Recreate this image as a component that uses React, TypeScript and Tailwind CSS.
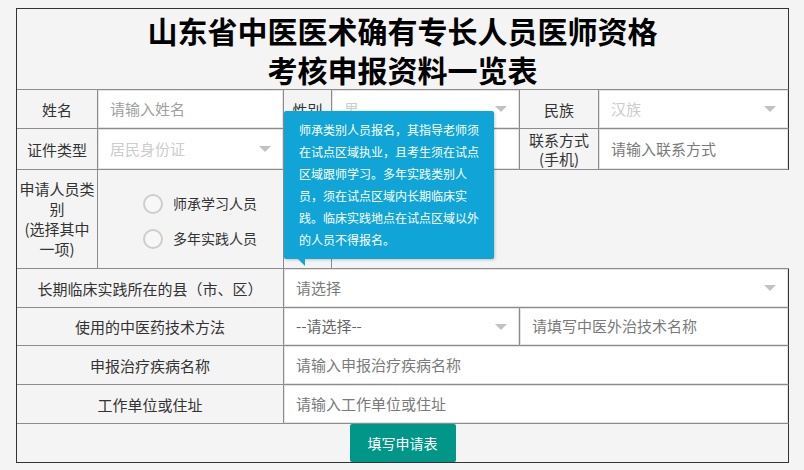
import React from "react";

const line = "border-[#8c8c8c]";

function Arrow() {
  return (
    <span className="absolute right-[11px] top-1/2 -mt-[3px] h-0 w-0 border-x-[6px] border-t-[6px] border-x-transparent border-t-[#c2c2c2]" />
  );
}

function Field({
  text,
  tone = "text-[#7a7a7a]",
  select = false,
}: {
  text?: string;
  tone?: string;
  select?: boolean;
}) {
  return (
    <div className="relative flex h-full w-full items-center border border-[#e3e3e3] bg-white pl-[11px]">
      <span className={`text-[15px] ${tone}`}>{text}</span>
      {select && <Arrow />}
    </div>
  );
}

function Label({ children, className = "" }: { children: React.ReactNode; className?: string }) {
  return (
    <div
      className={`flex items-center justify-center border-r ${line} text-center text-[15px] leading-[19px] text-[#333] ${className}`}
    >
      {children}
    </div>
  );
}

function Radio({ label }: { label: string }) {
  return (
    <label className="flex items-center gap-[10px]">
      <span className="h-[20px] w-[20px] rounded-full border-2 border-[#cdcdcd] bg-[#f7f7f7]" />
      <span className="text-[14px] text-[#333]">{label}</span>
    </label>
  );
}

export default function App() {
  return (
    <div className="min-h-[470px] bg-[#f4f4f4] pt-[8px] font-['Noto_Sans_CJK_SC',sans-serif]">
      <div className="relative ml-[16px] w-[773px] border-b border-l border-t border-[#333] bg-[#f4f4f4]">
        {/* Title */}
        <div className={`h-[81px] border-b border-r ${line} !border-r-[#333] pt-[2px] text-center text-[30px] font-bold leading-[39px] text-black`}>
          <div>山东省中医医术确有专长人员医师资格</div>
          <div>考核申报资料一览表</div>
        </div>

        {/* Row 1 */}
        <div className={`flex h-[39px] border-b border-r ${line} !border-r-[#333]`}>
          <Label className="w-[81px]">姓名</Label>
          <div className={`w-[186px] border-r ${line}`}>
            <Field text="请输入姓名" tone="text-[#a0a0a0]" />
          </div>
          <Label className="w-[48px]">性别</Label>
          <div className={`w-[188px] border-r ${line}`}>
            <Field text="男" tone="text-[#cccccc]" select />
          </div>
          <Label className="w-[79px]">民族</Label>
          <div className="flex-1">
            <Field text="汉族" tone="text-[#cccccc]" select />
          </div>
        </div>

        {/* Row 2 */}
        <div className={`flex h-[41px] border-b border-r ${line} !border-r-[#333]`}>
          <Label className="w-[81px]">证件类型</Label>
          <div className={`w-[186px] border-r ${line}`}>
            <Field text="居民身份证" tone="text-[#cccccc]" select />
          </div>
          <Label className="w-[48px]">{""}</Label>
          <div className={`w-[188px] border-r ${line}`}>
            <Field />
          </div>
          <Label className="w-[79px] leading-[18px]">
            联系方式
            <br />
            (手机)
          </Label>
          <div className="flex-1">
            <Field text="请输入联系方式" />
          </div>
        </div>

        {/* Row 3 */}
        <div className={`flex h-[99px] border-b ${line}`}>
          <Label className="w-[81px] leading-[20px]">
            <div className="max-w-[76px]">
              申请人员类别
              <br />
              (选择其中一项)
            </div>
          </Label>
          <div className={`flex w-[186px] flex-col justify-center gap-[14px] border-r ${line} pl-[45px] pt-[4px]`}>
            <Radio label="师承学习人员" />
            <Radio label="多年实践人员" />
          </div>
          <div className={`w-[48px] border-r ${line}`} />
          <div className="flex-1" />
        </div>

        {/* Row 4 */}
        <div className={`flex h-[39px] border-b border-r ${line} !border-r-[#333]`}>
          <Label className="w-[267px]">长期临床实践所在的县（市、区）</Label>
          <div className="flex-1">
            <Field text="请选择" select />
          </div>
        </div>

        {/* Row 5 */}
        <div className={`flex h-[38px] border-b border-r ${line} !border-r-[#333]`}>
          <Label className="w-[267px]">使用的中医药技术方法</Label>
          <div className={`w-[236px] border-r ${line}`}>
            <Field text="--请选择--" tone="text-[#666]" select />
          </div>
          <div className="flex-1">
            <Field text="请填写中医外治技术名称" />
          </div>
        </div>

        {/* Row 6 */}
        <div className={`flex h-[39px] border-b border-r ${line} !border-r-[#333]`}>
          <Label className="w-[267px]">申报治疗疾病名称</Label>
          <div className="flex-1">
            <Field text="请输入申报治疗疾病名称" />
          </div>
        </div>

        {/* Row 7 */}
        <div className={`flex h-[39px] border-b border-r ${line} !border-r-[#333]`}>
          <Label className="w-[267px]">工作单位或住址</Label>
          <div className="flex-1">
            <Field text="请输入工作单位或住址" />
          </div>
        </div>

        {/* Submit */}
        <div className="flex h-[38px] items-start justify-center border-r border-[#333]">
          <button className="h-[38px] rounded-[2px] bg-[#009688] px-[18px] text-[14px] text-white">
            填写申请表
          </button>
        </div>

        {/* Tip */}
        <div className="absolute left-[267px] top-[102px] w-[210px] rounded-[2px] bg-[#10a5d6] px-[15px] py-[8px] text-[12px] leading-[22px] text-white shadow-[1px_1px_3px_rgba(0,0,0,0.2)]">
          师承类别人员报名，其指导老师须在试点区域执业，且考生须在试点区域跟师学习。多年实践类别人员，须在试点区域内长期临床实践。临床实践地点在试点区域以外的人员不得报名。
          <span className="absolute left-[14px] top-full h-0 w-0 border-l-[7px] border-t-[7px] border-l-transparent border-t-[#10a5d6]" />
        </div>
      </div>
    </div>
  );
}
